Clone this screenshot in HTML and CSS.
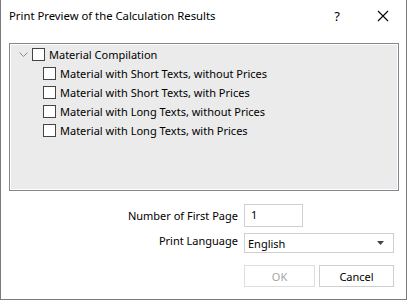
FILE: index.html
```html
<!DOCTYPE html>
<html lang="en">
<head>
  <meta charset="UTF-8">
  <meta name="viewport" content="width=device-width, initial-scale=1.0">
  <title>Print Preview of the Calculation Results</title>
  <link rel="stylesheet" href="styles.css">
</head>
<body>
  <div class="window">
    <div class="titlebar">
      <span class="title">Print Preview of the Calculation Results</span>
      <span class="help">?</span>
      <span class="close">
        <svg width="12" height="12" viewBox="0 0 12 12"><path d="M1 1L11 11M11 1L1 11" stroke="#000" stroke-width="1.1" fill="none"/></svg>
      </span>
    </div>

    <div class="tree">
      <div class="node">
        <svg class="chevron" width="9" height="6" viewBox="0 0 9 6"><path d="M0.5 0.5L4.5 4.5L8.5 0.5" stroke="#8a8a8a" stroke-width="1" fill="none"/></svg>
        <span class="check"></span>
        <span>Material Compilation</span>
      </div>
      <div class="node child"><span class="check"></span><span>Material with Short Texts, without Prices</span></div>
      <div class="node child"><span class="check"></span><span>Material with Short Texts, with Prices</span></div>
      <div class="node child"><span class="check"></span><span>Material with Long Texts, without Prices</span></div>
      <div class="node child"><span class="check"></span><span>Material with Long Texts, with Prices</span></div>
    </div>

    <div class="form">
      <label class="label">Number of First Page</label>
      <div class="field"><span class="input">1</span></div>
      <label class="label">Print Language</label>
      <div class="field">
        <span class="select">English
          <svg width="7" height="4" viewBox="0 0 7 4"><path d="M0 0H7L3.5 4Z" fill="#444"/></svg>
        </span>
      </div>
      <div class="buttons">
        <button class="btn" disabled>OK</button>
        <button class="btn">Cancel</button>
      </div>
    </div>
  </div>
</body>
</html>
```

FILE: styles.css
```css
* {
  box-sizing: border-box;
}
body {
  margin: 0;
  background: #fff;
  font-family: "Noto Sans", "Open Sans", sans-serif;
  font-size: 11px;
  color: #000;
}
.window {
  width: 407px;
  height: 300px;
  border: 1px solid #7a7a7a;
  border-top: none;
  background: #fff;
}
.titlebar {
  display: flex;
  align-items: center;
  height: 31px;
  padding-left: 8px;
}
.title {
  flex: 1;
  font-size: 11.3px;
}
.help {
  width: 46px;
  text-align: center;
  font-size: 13px;
}
.close {
  display: flex;
  justify-content: center;
  width: 46px;
}
.tree {
  margin: 12px 7px 0 8px;
  height: 148px;
  border: 1px solid #828790;
  box-shadow: inset 0 0 0 1px #fff;
  background: #ebebeb;
  padding: 1px 0 0 9px;
}
.node {
  display: flex;
  align-items: center;
  height: 19px;
}
.chevron {
  margin-right: 4px;
}
.child {
  padding-left: 24px;
}
.check {
  width: 13px;
  height: 13px;
  border: 1px solid #444;
  background: #fff;
  margin-right: 4px;
}
.form {
  display: grid;
  grid-template-columns: 1fr 150px;
  column-gap: 6px;
  padding: 13px 12px 0 0;
}
.label {
  text-align: right;
  align-self: center;
}
.field {
  display: flex;
}
.input {
  width: 59px;
  height: 23px;
  border: 1px solid #cfcfcf;
  padding: 2px 0 0 6px;
}
.select {
  display: flex;
  align-items: center;
  justify-content: space-between;
  width: 150px;
  height: 20px;
  margin-top: 6px;
  border: 1px solid #cfcfcf;
  padding: 0 9px 0 3px;
}
.buttons {
  grid-column: 2;
  display: flex;
  gap: 4px;
  margin-top: 12px;
}
.btn {
  height: 22px;
  border: 1px solid #cfcfcf;
  background: #fff;
  font-family: inherit;
  font-size: 11px;
  color: #000;
  padding: 0;
}
.btn:first-child {
  width: 71px;
}
.btn:last-child {
  width: 75px;
}
.btn:disabled {
  color: #a6a6a6;
  border-color: #dedede;
}
```
